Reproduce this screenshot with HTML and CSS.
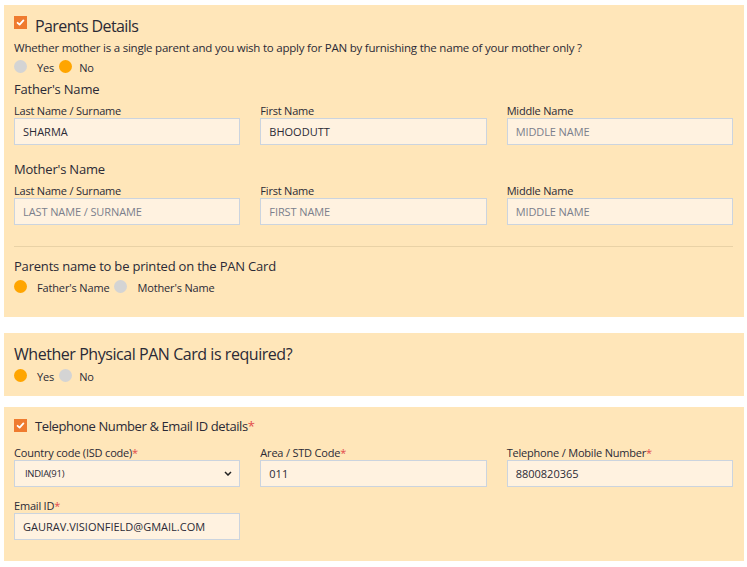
FILE: index.html
```html
<!DOCTYPE html>
<html lang="en">
<head>
<meta charset="utf-8">
<title>PAN Application</title>
<link rel="stylesheet" href="styles.css">
</head>
<body>
<section class="panel panel-parents">
  <div class="panel-title title-row-lg">
    <span class="check"><svg viewBox="0 0 13 13" width="13" height="13"><rect width="13" height="13" fill="#ef7b2f"/><path d="M3.6 6.8 L5.6 8.6 L9.4 4.4" fill="none" stroke="#fff" stroke-width="1.8" stroke-linecap="round" stroke-linejoin="round"/></svg></span>
    <span class="title-lg">Parents Details</span>
  </div>
  <p class="question">Whether mother is a single parent and you wish to apply for PAN by furnishing the name of your mother only ?</p>
  <div class="radios">
    <span class="radio"></span><span class="radio-label">Yes</span>
    <span class="radio on"></span><span class="radio-label tight">No</span>
  </div>

  <h4 class="group group-father">Father's Name</h4>
  <div class="grid3">
    <div class="field"><label>Last Name / Surname</label><div class="input">SHARMA</div></div>
    <div class="field"><label>First Name</label><div class="input">BHOODUTT</div></div>
    <div class="field"><label>Middle Name</label><div class="input ph">MIDDLE NAME</div></div>
  </div>

  <h4 class="group group-mother">Mother's Name</h4>
  <div class="grid3">
    <div class="field"><label>Last Name / Surname</label><div class="input ph">LAST NAME / SURNAME</div></div>
    <div class="field"><label>First Name</label><div class="input ph">FIRST NAME</div></div>
    <div class="field"><label>Middle Name</label><div class="input ph">MIDDLE NAME</div></div>
  </div>

  <hr class="divider">

  <h4 class="group group-print">Parents name to be printed on the PAN Card</h4>
  <div class="radios radios-print">
    <span class="radio on"></span><span class="radio-label">Father's Name</span>
    <span class="radio"></span><span class="radio-label">Mother's Name</span>
  </div>
</section>

<section class="panel panel-physical">
  <h3 class="title-xl">Whether Physical PAN Card is required?</h3>
  <div class="radios">
    <span class="radio on"></span><span class="radio-label">Yes</span>
    <span class="radio"></span><span class="radio-label tight">No</span>
  </div>
</section>

<section class="panel panel-contact">
  <div class="panel-title title-row-md">
    <span class="check"><svg viewBox="0 0 13 13" width="13" height="13"><rect width="13" height="13" fill="#ef7b2f"/><path d="M3.6 6.8 L5.6 8.6 L9.4 4.4" fill="none" stroke="#fff" stroke-width="1.8" stroke-linecap="round" stroke-linejoin="round"/></svg></span>
    <span class="title-md">Telephone Number &amp; Email ID details<span class="req">*</span></span>
  </div>
  <div class="grid3 row-phone">
    <div class="field"><label>Country code (ISD code)<span class="req">*</span></label>
      <div class="input select"><span class="select-text">INDIA(91)</span>
        <svg class="chev" viewBox="0 0 8 5" width="8" height="5"><path d="M1 1 L4 4 L7 1" fill="none" stroke="#222" stroke-width="1.5"/></svg>
      </div>
    </div>
    <div class="field"><label>Area / STD Code<span class="req">*</span></label><div class="input">011</div></div>
    <div class="field"><label>Telephone / Mobile Number<span class="req">*</span></label><div class="input">8800820365</div></div>
  </div>
  <div class="grid3 row-email">
    <div class="field"><label>Email ID<span class="req">*</span></label><div class="input">GAURAV.VISIONFIELD@GMAIL.COM</div></div>
  </div>
</section>
</body>
</html>
```
FILE: styles.css
```css
* { box-sizing: border-box; }
body {
  margin: 5px 3px 0 4px;
  font-family: "Open Sans", "Noto Sans", sans-serif;
  color: #2b2a36;
  background: #fff;
}
.panel {
  background: #ffe6b9;
  padding: 10px 11px 0 10px;
}
.panel-parents { height: 312px; }
.panel-physical { margin-top: 16px; height: 63px; padding-top: 10px; }
.panel-contact { margin-top: 11px; height: 154px; }

.panel-title {
  display: flex;
  align-items: flex-start;
  gap: 8px;
}
.title-row-lg { height: 22px; line-height: 22px; }
.title-row-lg .check { margin-top: 1px; }
.title-row-md { height: 18px; line-height: 18px; }
.title-row-md .check { margin-top: 2px; }
.check { display: flex; width: 13px; height: 13px; flex: none; }
.title-lg { font-size: 16px; letter-spacing: -0.6px; }
.title-md { font-size: 13px; letter-spacing: -0.4px; }
.title-xl { margin: 0; font-size: 16px; font-weight: 400; letter-spacing: -0.45px; line-height: 22px; }
.req { color: #e24b4b; }

.question {
  margin: 3px 0 0;
  font-size: 11.5px;
  line-height: 16px;
  letter-spacing: -0.22px;
}
.radios {
  display: flex;
  align-items: center;
  height: 17px;
  margin-top: 3px;
  font-size: 11px;
  letter-spacing: -0.15px;
}
.radio {
  width: 13px;
  height: 13px;
  border-radius: 50%;
  background: #d4d4d4;
  margin-top: -3px;
  flex: none;
}
.radio.on { background: #ffa500; }
.radio-label { margin: 0 5px 0 10px; }
.radio-label.tight { margin-left: 7px; }

.group {
  margin: 4px 0 0;
  font-size: 13px;
  font-weight: 400;
  line-height: 18px;
  letter-spacing: -0.2px;
}
.group-mother { margin-top: 15px; }
.group-print { margin-top: 10px; }

.grid3 {
  display: grid;
  grid-template-columns: repeat(3, 1fr);
  column-gap: 20px;
  margin-top: 6px;
}
.field label {
  display: block;
  font-size: 11px;
  line-height: 14px;
  letter-spacing: -0.2px;
}
.input {
  height: 27px;
  border: 1px solid #cbd4df;
  background: #fff2e0;
  font-size: 11px;
  padding: 0 8px;
  display: flex;
  align-items: center;
  color: #2b2a36;
}
.input.ph { color: #7b7f8c; letter-spacing: -0.1px; }
.select { justify-content: space-between; padding: 0 7px 0 10px; }
.select-text { font-size: 9.5px; letter-spacing: -0.3px; }

.divider {
  border: 0;
  border-top: 1px solid #e9d2a6;
  margin: 21px 0 0;
}
.radios-print { margin-top: 4px; }

.row-phone { margin-top: 11px; }
.row-email { margin-top: 12px; }
```
